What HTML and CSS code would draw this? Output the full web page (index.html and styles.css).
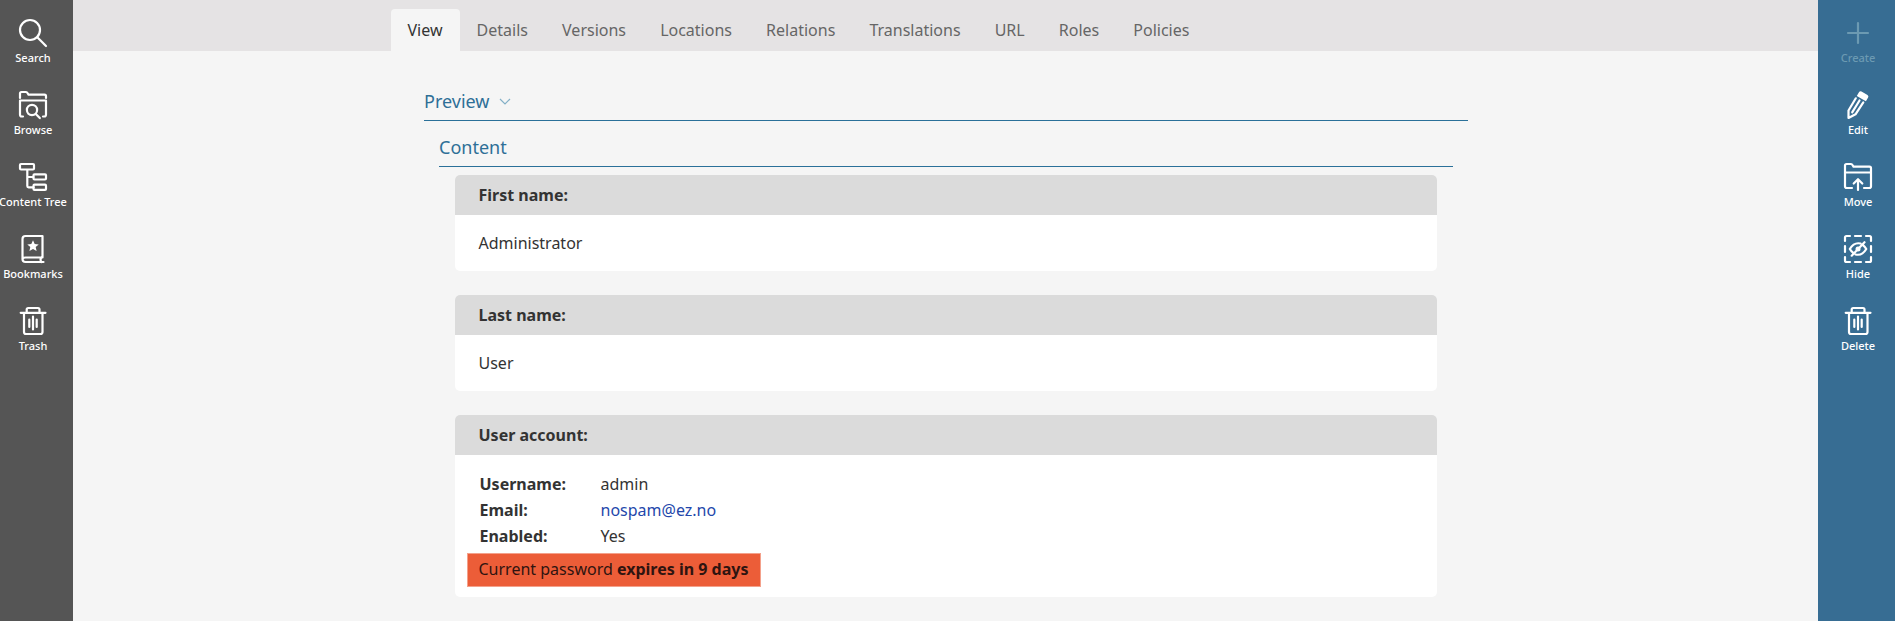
FILE: index.html
```
<!DOCTYPE html>
<html lang="en">
<head>
<meta charset="utf-8">
<title>Administrator User</title>
<link rel="stylesheet" href="styles.css">
</head>
<body>
<div class="app">
  <nav class="bar bar-left">
    <a class="action"><svg class="icon" viewBox="0 0 28 28"><circle cx="11" cy="11" r="10"/><path d="M18.3 18.3 27 27"/></svg><span>Search</span></a>
    <a class="action"><svg class="icon" viewBox="0 0 28 28"><path d="M1 7V2.500Q1 1 2.500 1H7q1 0 1.500 1l1 1.700H25.500Q27 3.700 27 5.200V7M1 9.500H27M4 25.500H2.700Q1 25.500 1 23.500V9.500M27 9.500V23.500Q27 25.500 25.300 25.500H24"/><circle cx="13" cy="19" r="5.100"/><path d="m16.800 22.900 4 4.200"/></svg><span>Browse</span></a>
    <a class="action"><svg class="icon" viewBox="0 0 28 28"><rect x="1" y="1" width="14" height="5.500" rx="1"/><rect x="14.500" y="11.300" width="12.500" height="5.200" rx="1"/><rect x="14.500" y="21.700" width="12.500" height="5.200" rx="1"/><path d="M8.300 7v16q0 1.300 1.300 1.300h5M8.300 14h6"/></svg><span>Content Tree</span></a>
    <a class="action"><svg class="icon" viewBox="0 0 28 28"><path d="M23.500 22.500V1H6.500Q3.500 1 3.500 4V24Q3.500 27 6.500 27H24.500M3.500 24.500Q3.500 22.500 6.500 22.500H23.500M22.300 22.500Q20.800 24.500 22.300 27"/><path class="solid" d="m14 5.300 1.700 3.700 4 .4-3 2.700.9 4-3.600-2-3.600 2 .9-4-3-2.700 4-.4z"/></svg><span>Bookmarks</span></a>
    <a class="action"><svg class="icon" viewBox="0 0 28 28"><path d="M1.700 5.800H26.500M7.700 5V2.500Q7.700 1 9.200 1H19Q20.500 1 20.500 2.500V5M5 6V25Q5 27 7 27H21.500Q23.500 27 23.500 25V6M10.300 12.500v7.500M14 9.500v13M17.700 12.500v7.500"/></svg><span>Trash</span></a>
  </nav>
  <main class="main">
    <ul class="tabs">
      <li class="tab tab-active">View</li><li class="tab">Details</li><li class="tab">Versions</li><li class="tab">Locations</li><li class="tab">Relations</li><li class="tab">Translations</li><li class="tab">URL</li><li class="tab">Roles</li><li class="tab">Policies</li>
    </ul>
    <div class="content">
      <h2 class="heading">Preview <svg class="chevron" viewBox="0 0 12 8"><path d="m1 1 5 5 5-5"/></svg></h2>
      <div class="group">
        <h3 class="heading heading-sub">Content</h3>
        <div class="fields">
          <section class="card"><div class="card-title">First name:</div><div class="card-body">Administrator</div></section>
          <section class="card"><div class="card-title">Last name:</div><div class="card-body">User</div></section>
          <section class="card">
            <div class="card-title">User account:</div>
            <div class="card-body account">
              <dl class="details">
                <dt>Username:</dt><dd>admin</dd>
                <dt>Email:</dt><dd><a class="mail">nospam@ez.no</a></dd>
                <dt>Enabled:</dt><dd>Yes</dd>
              </dl>
              <div class="alert">Current password <strong>expires in 9 days</strong></div>
            </div>
          </section>
        </div>
      </div>
    </div>
  </main>
  <nav class="bar bar-right">
    <a class="action disabled"><svg class="icon" viewBox="0 0 28 28"><path d="M14 4V24M4 14H24"/></svg><span>Create</span></a>
    <a class="action"><svg class="icon" viewBox="0 0 28 28"><path class="solid" d="M12.800 4.900 15.100 1Q16-.4 17.500.5L23.500 4Q25 5 24.100 6.500L21.900 10.300z"/><path d="M11.800 7.300 4.500 19.500V27L11.500 23.300 19.300 11.300"/><path d="M15.500 9.500 8.200 21.300"/></svg><span>Edit</span></a>
    <a class="action"><svg class="icon" viewBox="0 0 28 28"><path d="M1 7V2.500Q1 1 2.500 1H7q1 0 1.500 1l1 1.700H25.500Q27 3.700 27 5.200V7M1 9.500H27M8 25H2.700Q1 25 1 23.300V7M27 7V23.300Q27 25 25.300 25H20M14 27V16.500M9.700 20.500 14 16.200l4.300 4.300"/></svg><span>Move</span></a>
    <a class="action"><svg class="icon" viewBox="0 0 28 28"><path d="M1 6V2.500Q1 1 2.500 1H6M11 1h6M22 1h3.500Q27 1 27 2.500V6M27 11v6M27 22v3.500Q27 27 25.500 27H22M17 27h-6M6 27H2.500Q1 27 1 25.500V22M1 17v-6"/><path d="M16.500 8.500Q10 7 5.800 14q1.300 2.200 3.200 3.700M19.300 10.300q1.600 1.300 3 3.700-4.200 7-10.700 5.500M20.500 7.200 7.700 20.700"/><circle class="solid" cx="14" cy="14" r="2.500"/></svg><span>Hide</span></a>
    <a class="action"><svg class="icon" viewBox="0 0 28 28"><path d="M1.700 5.800H26.500M7.700 5V2.500Q7.700 1 9.200 1H19Q20.500 1 20.500 2.500V5M5 6V25Q5 27 7 27H21.500Q23.500 27 23.500 25V6M10.300 12.500v7.500M14 9.500v13M17.700 12.500v7.500"/></svg><span>Delete</span></a>
  </nav>
</div>
</body>
</html>
```
FILE: styles.css
```
* { box-sizing: border-box; }
body {
  margin: 0;
  font: 16px/24px "Noto Sans", sans-serif;
  color: #333;
  background: #f5f5f5;
}
.app { display: flex; height: 621px; overflow: hidden; }

.bar {
  display: flex;
  flex-direction: column;
  flex: none;
  gap: 24px;
  padding-top: 19px;
  color: #fff;
  font-size: 11px;
  font-weight: 500;
  line-height: 14px;
}
.bar-left { width: 73px; padding-right: 7px; background: #555; }
.bar-right { width: 77px; padding-left: 3px; background: #376d93; }
.action {
  display: flex;
  flex-direction: column;
  align-items: center;
  gap: 4px;
  height: 48px;
  padding-bottom: 2px;
  white-space: nowrap;
}
.disabled { color: #6c9ab2; }
.icon {
  flex: none;
  width: 28px;
  height: 28px;
  overflow: visible;
  fill: none;
  stroke: currentColor;
  stroke-width: 2.2;
  stroke-linecap: round;
  stroke-linejoin: round;
}
.icon .solid { fill: currentColor; stroke: none; }

.main { flex: 1; }
.tabs {
  display: flex;
  height: 51px;
  margin: 0;
  padding: 9px 0 0 318px;
  list-style: none;
  background: #e5e3e4;
}
.tab { padding: 9px 17px 9px 17.100px; color: #666; }
.tab-active { padding-left: 16.500px; color: #333; background: #f5f5f5; border-radius: 4px 4px 0 0; }

.content { width: 1044px; margin: 34px 0 0 351px; }
.heading {
  display: flex;
  align-items: center;
  gap: 10px;
  height: 36px;
  margin: 0;
  padding-bottom: 3px;
  border-bottom: 1px solid #2a7099;
  color: #2e6f97;
  font-size: 18px;
  font-weight: 400;
}
.chevron { width: 12px; height: 8px; margin-top: 2px; fill: none; stroke: #84b0c7; stroke-width: 1.2; }
.group { padding: 10px 15px 0; }
.fields { display: grid; gap: 24px; padding: 8px 16px 0; }
.card { overflow: hidden; border-radius: 5px; background: #fff; }
.card-title { height: 40px; padding: 8px 23.500px; background: #dbdbdb; font-weight: 700; }
.card-body { height: 56px; padding: 16px 23.500px; }
.card-body.account { height: 142px; padding: 16px 12px; }
.details {
  display: grid;
  grid-template-columns: 121px auto;
  grid-auto-rows: 26px;
  line-height: 26px;
  margin: 0 12.500px;
}
.details dt { font-weight: 700; }
.details dd { margin: 0; }
.mail { color: #2347ab; }
.alert {
  width: 294px;
  height: 34px;
  margin-top: 4px;
  padding: 3px 10.500px;
  border: 1px solid #f4a18b;
  background: #ec5d38;
  color: #2f1410;
  white-space: nowrap;
}
```
